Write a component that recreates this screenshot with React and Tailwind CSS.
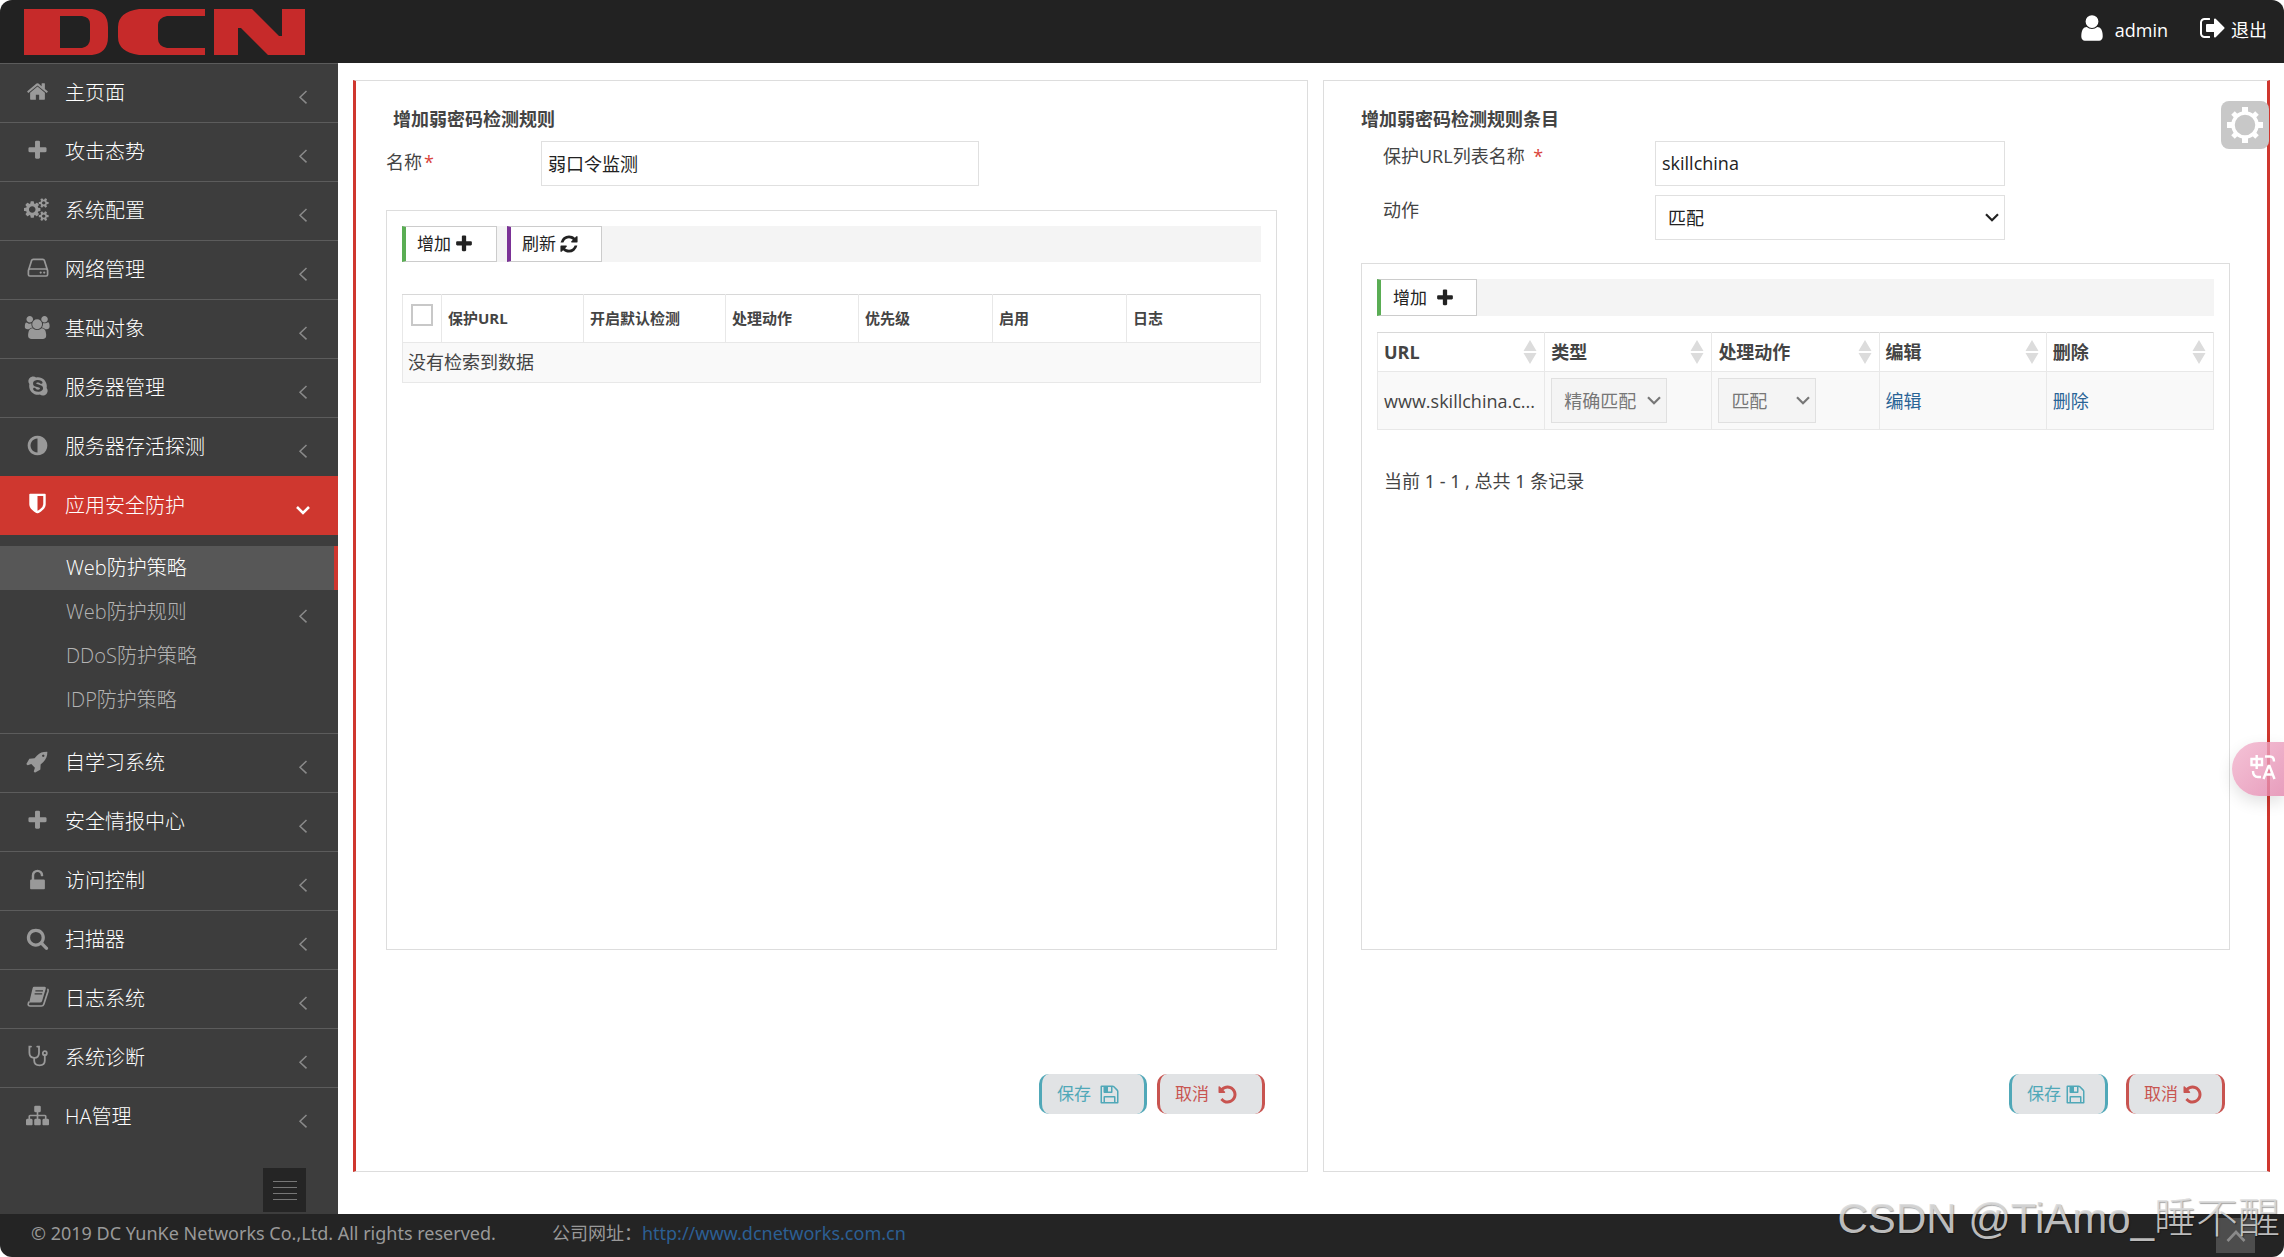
import { FaSkype } from 'react-icons/fa'

const ICONS = {
  home: 'M1472 992v480q0 26-19 45t-45 19h-384v-384h-256v384h-384q-26 0-45-19t-19-45v-480q0-1 .5-3t.5-3l575-474 575 474q1 2 1 6zm223-69l-62 74q-8 9-21 11h-3q-13 0-21-7l-692-577-692 577q-12 8-24 7-13-2-21-11l-62-74q-8-10-7-23.5t11-21.5l719-599q32-26 76-26t76 26l244 204v-195q0-14 9-23t23-9h192q14 0 23 9t9 23v408l219 182q10 8 11 21.5t-7 23.5z',
  plus: 'M1600 736v192q0 40-28 68t-68 28h-416v416q0 40-28 68t-68 28h-192q-40 0-68-28t-28-68v-416h-416q-40 0-68-28t-28-68v-192q0-40 28-68t68-28h416v-416q0-40 28-68t68-28h192q40 0 68 28t28 68v416h416q40 0 68 28t28 68z',
  cogs: 'M896 896q0-106-75-181t-181-75-181 75-75 181 75 181 181 75 181-75 75-181zm768 512q0-52-38-90t-90-38-90 38-38 90q0 53 37.5 90.5t90.5 37.5 90.5-37.5 37.5-90.5zm0-1024q0-52-38-90t-90-38-90 38-38 90q0 53 37.5 90.5t90.5 37.5 90.5-37.5 37.5-90.5zm-384 421v185q0 10-7 19.5t-16 10.5l-155 24q-11 35-32 76 34 48 90 115 7 11 7 20 0 12-7 19-23 30-82.5 89.5t-78.5 59.5q-11 0-21-7l-115-90q-37 19-77 31-11 108-23 155-7 24-30 24h-186q-11 0-20-7.5t-10-17.5l-23-153q-34-10-75-31l-118 89q-7 7-20 7-11 0-21-8-144-133-144-160 0-9 7-19 10-14 41-53t47-61q-23-44-35-82l-152-24q-10-1-17-9.5t-7-19.5v-185q0-10 7-19.5t16-10.5l155-24q11-35 32-76-34-48-90-115-7-11-7-20 0-12 7-20 22-30 82-89t79-59q11 0 21 7l115 90q34-18 77-32 11-108 23-154 7-24 30-24h186q11 0 20 7.5t10 17.5l23 153q34 10 75 31l118-89q8-7 20-7 11 0 21 8 144 133 144 160 0 8-7 19-12 16-42 54t-45 60q23 48 34 82l152 23q10 2 17 10.5t7 19.5zm640 533v140q0 16-149 31-12 27-30 52 51 113 51 138 0 4-4 7-122 71-124 71-8 0-46-47t-52-68q-20 2-30 2t-30-2q-14 21-52 68t-46 47q-2 0-124-71-4-3-4-7 0-25 51-138-18-25-30-52-149-15-149-31v-140q0-16 149-31 13-29 30-52-51-113-51-138 0-4 4-7 4-2 35-20t59-34 30-16q8 0 46 46.5t52 67.5q20-2 30-2t30 2q51-71 92-112l6-2q4 0 124 70 4 3 4 7 0 25-51 138 17 23 30 52 149 15 149 31zm0-1024v140q0 16-149 31-12 27-30 52 51 113 51 138 0 4-4 7-122 71-124 71-8 0-46-47t-52-68q-20 2-30 2t-30-2q-14 21-52 68t-46 47q-2 0-124-71-4-3-4-7 0-25 51-138-18-25-30-52-149-15-149-31v-140q0-16 149-31 13-29 30-52-51-113-51-138 0-4 4-7 4-2 35-20t59-34 30-16q8 0 46 46.5t52 67.5q20-2 30-2t30 2q51-71 92-112l6-2q4 0 124 70 4 3 4 7 0 25-51 138 17 23 30 52 149 15 149 31z',
  users: 'M657 896q-162 5-265 128h-134q-82 0-138-40.5t-56-118.5q0-353 124-353 6 0 43.5 21t97.5 42.5 119 21.5q67 0 133-23-5 37-5 66 0 159 93 290zm1071 637q0 120-73 189.5t-194 69.5h-874q-121 0-194-69.5t-73-189.5q0-53 3.5-103.5t14-109 26.5-108.5 43-97.5 62-81 85.5-53.5 111.5-20q10 0 43 21.5t73 48 107 48 135 21.5 135-21.5 107-48 73-48 43-21.5q61 0 111.5 20t85.5 53.5 62 81 43 97.5 26.5 108.5 14 109 3.5 103.5zm-1024-1277q0 106-75 181t-181 75-181-75-75-181 75-181 181-75 181 75 75 181zm704 384q0 159-112.5 271.5t-271.5 112.5-271.5-112.5-112.5-271.5 112.5-271.5 271.5-112.5 271.5 112.5 112.5 271.5zm576 225q0 78-56 118.5t-138 40.5h-134q-103-123-265-128 93-131 93-290 0-29-5-66 66 23 133 23 59 0 119-21.5t97.5-42.5 43.5-21q124 0 124 353zm-128-609q0 106-75 181t-181 75-181-75-75-181 75-181 181-75 181 75 75 181z',
  adjust: 'M896 1440v-1088q-148 0-273 73t-198 198-73 273 73 273 198 198 273 73zm768-544q0 209-103 385.5t-279.5 279.5-385.5 103-385.5-103-279.5-279.5-103-385.5 103-385.5 279.5-279.5 385.5-103 385.5 103 279.5 279.5 103 385.5z',
  shield: 'M1344 960v-640h-448v1137q119-63 213-137 235-184 235-360zm192-768v768q0 86-33.5 170.5t-83 150-118 127.5-126.5 103-121 77.5-89.5 49.5-42.5 20q-12 6-26 6t-26-6q-16-7-42.5-20t-89.5-49.5-121-77.5-126.5-103-118-127.5-83-150-33.5-170.5v-768q0-26 19-45t45-19h1152q26 0 45 19t19 45z',
  rocket: 'M1440 448q0-40-28-68t-68-28-68 28-28 68 28 68 68 28 68-28 28-68zm224-288q0 249-75.5 430.5t-253.5 360.5q-81 80-195 176l-20 379q-2 16-16 26l-384 224q-7 4-16 4-12 0-23-9l-64-64q-13-14-8-32l85-276-281-281-276 85q-3 1-9 1-14 0-23-9l-64-64q-17-19-5-39l224-384q10-14 26-16l379-20q96-114 176-195 188-187 358-258t431-71q14 0 24 9.5t10 22.5z',
  unlock: 'M1376 896q40 0 68 28t28 68v576q0 40-28 68t-68 28h-960q-40 0-68-28t-28-68v-576q0-40 28-68t68-28h32v-320q0-185 131.5-316.5t316.5-131.5 316.5 131.5 131.5 316.5q0 26-19 45t-45 19h-64q-26 0-45-19t-19-45q0-106-75-181t-181-75-181 75-75 181v320h736z',
  search: 'M1216 832q0-185-131.5-316.5t-316.5-131.5-316.5 131.5-131.5 316.5 131.5 316.5 316.5 131.5 316.5-131.5 131.5-316.5zm512 832q0 52-38 90t-90 38q-54 0-90-38l-343-342q-179 124-399 124-143 0-273.5-55.5t-225-150-150-225-55.5-273.5 55.5-273.5 150-225 225-150 273.5-55.5 273.5 55.5 225 150 150 225 55.5 273.5q0 220-124 399l343 343q37 37 37 90z',
  sitemap: 'M1792 1248v320q0 40-28 68t-68 28h-320q-40 0-68-28t-28-68v-320q0-40 28-68t68-28h96v-192h-512v192h96q40 0 68 28t28 68v320q0 40-28 68t-68 28h-320q-40 0-68-28t-28-68v-320q0-40 28-68t68-28h96v-192h-512v192h96q40 0 68 28t28 68v320q0 40-28 68t-68 28h-320q-40 0-68-28t-28-68v-320q0-40 28-68t68-28h96v-192q0-52 38-90t90-38h512v-192h-96q-40 0-68-28t-28-68v-320q0-40 28-68t68-28h320q40 0 68 28t28 68v320q0 40-28 68t-68 28h-96v192h512q52 0 90 38t38 90v192h96q40 0 68 28t28 68z',
  refresh: 'M1639 1056q0 5-1 7-64 268-268 434.5t-478 166.5q-146 0-282.5-55t-243.5-157l-129 129q-19 19-45 19t-45-19-19-45v-448q0-26 19-45t45-19h448q26 0 45 19t19 45-19 45l-137 137q71 66 161 102t187 36q134 0 250-65t186-179q11-17 53-117 8-23 30-23h192q13 0 22.5 9.5t9.5 22.5zm25-800v448q0 26-19 45t-45 19h-448q-26 0-45-19t-19-45 19-45l138-138q-148-137-349-137-134 0-250 65t-186 179q-11 17-53 117-8 23-30 23h-199q-13 0-22.5-9.5t-9.5-22.5v-7q65-268 270-434.5t480-166.5q146 0 284 55.5t245 156.5l130-129q19-19 45-19t45 19 19 45z',
  undo: 'M1664 896q0 156-61 298t-164 245-245 164-298 61q-172 0-327-72.5t-264-204.5q-7-10-6.5-22.5t8.5-20.5l137-138q10-9 25-9 16 2 23 12 73 95 179 147t225 52q104 0 198.5-40.5t163.5-109.5 109.5-163.5 40.5-198.5-40.5-198.5-109.5-163.5-163.5-109.5-198.5-40.5q-98 0-188 35.5t-160 101.5l137 138q31 30 14 69-17 40-59 40h-448q-26 0-45-19t-19-45v-448q0-42 40-59 39-17 69 14l130 129q107-101 244.5-156.5t284.5-55.5q156 0 298 61t245 164 164 245 61 298z',
  save: 'M512 1536h768v-384h-768v384zm896 0h128v-896q0-14-10-38.5t-20-34.5l-281-281q-10-10-34-20t-39-10v416q0 40-28 68t-68 28h-576q-40 0-68-28t-28-68v-416h-128v1280h128v-416q0-40 28-68t68-28h832q40 0 68 28t28 68v416zm-384-928v-320q0-13-9.5-22.5t-22.5-9.5h-192q-13 0-22.5 9.5t-9.5 22.5v320q0 13 9.5 22.5t22.5 9.5h192q13 0 22.5-9.5t9.5-22.5zm640 32v928q0 40-28 68t-68 28h-1344q-40 0-68-28t-28-68v-1344q0-40 28-68t68-28h928q40 0 88 20t76 48l280 280q28 28 48 76t20 88z',
  user: 'M1536 1399q0 109-62.5 187t-150.5 78h-854q-88 0-150.5-78t-62.5-187q0-85 8.5-160.5t31.5-152 58.5-131 94-89 134.5-34.5q131 128 313 128t313-128q76 0 134.5 34.5t94 89 58.5 131 31.5 152 8.5 160.5zm-256-887q0 159-112.5 271.5t-271.5 112.5-271.5-112.5-112.5-271.5 112.5-271.5 271.5-112.5 271.5 112.5 112.5 271.5z',
  signOut: 'M704 1440q0 4 1 20t.5 26.5-3 23.5-10 19.5-20.5 6.5h-320q-119 0-203.5-84.5t-84.5-203.5v-704q0-119 84.5-203.5t203.5-84.5h320q13 0 22.5 9.5t9.5 22.5q0 4 1 20t.5 26.5-3 23.5-10 19.5-20.5 6.5h-320q-66 0-113 47t-47 113v704q0 66 47 113t113 47h312l11.5 1 11.5 3 8 5.5 7 9 2 13.5zm928-544q0 26-19 45l-544 544q-19 19-45 19t-45-19-19-45v-288h-448q-26 0-45-19t-19-45v-384q0-26 19-45t45-19h448v-288q0-26 19-45t45-19 45 19l544 544q19 19 19 45z',
}

const WIDE = ['cogs', 'users']

function Icon({ name, className }) {
  return (
    <svg viewBox={WIDE.includes(name) ? '0 0 2048 1792' : '0 0 1792 1792'} className={className} fill="currentColor" aria-hidden="true">
      <path d={ICONS[name]} />
    </svg>
  )
}

function HddIcon() {
  return (
    <svg viewBox="0 0 24 24" className="h-6 w-6" fill="none" stroke="currentColor" strokeWidth="1.7" aria-hidden="true">
      <path d="M2.6 14 5.6 4.6Q6 3.4 7.2 3.4h9.6q1.2 0 1.6 1.2L21.4 14" />
      <rect x="2.4" y="13" width="19.2" height="7" rx="1.4" />
      <circle cx="14.7" cy="16.6" r="1.1" fill="currentColor" stroke="none" />
      <circle cx="18.2" cy="16.6" r="1.1" fill="currentColor" stroke="none" />
    </svg>
  )
}

function BookIcon() {
  return (
    <svg viewBox="0 0 24 24" className="h-6 w-6" fill="none" stroke="currentColor" aria-hidden="true">
      <path d="M8 1.8h10.6q1.7 0 1.2 1.7l-3.7 12.4q-.5 1.7-2.2 1.7H3.2L6.6 3.2Q7 1.8 8 1.8z" fill="currentColor" stroke="none" />
      <path d="M3 16.6Q.9 21 4 21h11.4q1.8 0 2.4-1.8L22 6.2q.4-1.6-.6-2.2" strokeWidth="1.7" />
      <path d="M9.4 5.8h7.6M8.6 8.8h7.6" stroke="#3d3d3d" strokeWidth="1.2" />
    </svg>
  )
}

function StethoscopeIcon() {
  return (
    <svg viewBox="0 0 24 24" className="h-6 w-6" fill="none" stroke="currentColor" strokeWidth="1.8" strokeLinecap="round" aria-hidden="true">
      <path d="M5 2.6H3.4v6.2q0 5 4.8 5t4.8-5V2.6h-1.8" />
      <path d="M8.2 14v2.6q0 4.8 5.3 4.8t5.3-4.8v-5.4" />
      <circle cx="18.8" cy="9.2" r="2" />
    </svg>
  )
}

function Chevron({ open }) {
  return open ? (
    <svg viewBox="0 0 16 16" className="mt-2 h-4 w-4" fill="none" stroke="currentColor" strokeWidth="2.6" aria-hidden="true">
      <path d="M2 5 8 11 14 5" />
    </svg>
  ) : (
    <svg viewBox="0 0 16 16" className="mt-2 h-4 w-4 text-[#8a8a8a]" fill="none" stroke="currentColor" strokeWidth="1.5" aria-hidden="true">
      <path d="M11.5 2 5 8.2 11.5 14.4" />
    </svg>
  )
}

const MENU = [
  { label: '主页面', icon: <Icon name="home" className="h-[23px]" /> },
  { label: '攻击态势', icon: <Icon name="plus" className="h-[23px]" /> },
  { label: '系统配置', icon: <Icon name="cogs" className="h-[23px]" /> },
  { label: '网络管理', icon: <HddIcon /> },
  { label: '基础对象', icon: <Icon name="users" className="h-[23px]" /> },
  { label: '服务器管理', icon: <FaSkype className="h-[22px] w-[22px]" /> },
  { label: '服务器存活探测', icon: <Icon name="adjust" className="h-[23px]" /> },
  {
    label: '应用安全防护',
    icon: <Icon name="shield" className="h-[23px]" />,
    children: [
      { label: 'Web防护策略', active: true },
      { label: 'Web防护规则', more: true },
      { label: 'DDoS防护策略' },
      { label: 'IDP防护策略' },
    ],
  },
  { label: '自学习系统', icon: <Icon name="rocket" className="h-[23px]" /> },
  { label: '安全情报中心', icon: <Icon name="plus" className="h-[23px]" /> },
  { label: '访问控制', icon: <Icon name="unlock" className="h-[23px]" /> },
  { label: '扫描器', icon: <Icon name="search" className="h-[23px]" /> },
  { label: '日志系统', icon: <BookIcon /> },
  { label: '系统诊断', icon: <StethoscopeIcon /> },
  { label: 'HA管理', icon: <Icon name="sitemap" className="h-[23px]" /> },
]

function Logo() {
  return (
    <svg viewBox="0 0 282 46" className="ml-6 h-[46px] w-[282px]" fill="#c62a2a" role="img" aria-label="DCN">
      <path fillRule="evenodd" d="M0 0h68q16 2 16 18v10q0 16-16 18H0zM36 7v32h22q8-2 8-9V15q0-7-8-8z" />
      <path d="M181 0v7h-38q-9 2-9 9v14q0 7 9 9h38v7h-66q-21-3-21-18V18q0-15 21-18z" />
      <path d="M190 0h38l27 27h3V0h23v46h-37l-27-27h-3v27h-24z" />
    </svg>
  )
}

function TopBar() {
  return (
    <header className="flex h-[63px] items-center justify-between bg-[#222] pr-[17px] text-lg text-white">
      <a href="#home"><Logo /></a>
      <nav className="flex items-center gap-[31px] pb-1">
        <a href="#profile" className="flex items-center gap-2">
          <Icon name="user" className="mb-1 h-[30px]" />
          admin
        </a>
        <a href="#logout" className="flex items-center gap-1">
          <Icon name="signOut" className="mb-1 h-7" />
          退出
        </a>
      </nav>
    </header>
  )
}

function Sidebar() {
  return (
    <aside className="flex w-[338px] shrink-0 flex-col bg-[#3d3d3d] text-xl font-light text-white">
      <ul>
        {MENU.map((item) => (
          <li key={item.label}>
            <a
              href="#menu"
              className={
                item.children
                  ? 'flex h-[59px] items-center bg-[#cf372f] pr-[27px] pl-6'
                  : 'flex h-[59px] items-center border-t border-[#5c5c5c] pr-[27px] pl-6'
              }
            >
              <span className={item.children ? 'mb-1 flex w-[27px] justify-center' : 'mb-1 flex w-[27px] justify-center text-[#999]'}>
                {item.icon}
              </span>
              <span className="ml-3.5 flex-1">{item.label}</span>
              <Chevron open={!!item.children} />
            </a>
            {item.children && (
              <ul className="py-[11px]">
                {item.children.map((sub) => (
                  <li key={sub.label}>
                    <a
                      href="#submenu"
                      className={
                        sub.active
                          ? 'flex h-11 items-center border-r-4 border-[#cf372f] bg-[#575757] pr-[23px] pl-[66px]'
                          : 'flex h-11 items-center pr-[27px] pl-[66px] text-[#b4b4b4]'
                      }
                    >
                      <span className="flex-1">{sub.label}</span>
                      {sub.more && <Chevron />}
                    </a>
                  </li>
                ))}
              </ul>
            )}
          </li>
        ))}
      </ul>
      <button aria-label="收起菜单" className="mt-auto mr-8 mb-0.5 flex h-11 w-[43px] flex-col items-center justify-center gap-[5px] self-end bg-[#252525]">
        <span className="h-px w-6 bg-[#777]" />
        <span className="h-px w-6 bg-[#777]" />
        <span className="h-px w-6 bg-[#777]" />
        <span className="h-px w-6 bg-[#777]" />
      </button>
    </aside>
  )
}

function SortIcon() {
  return (
    <svg viewBox="0 0 14 24" className="h-6 w-3.5" fill="#dcdcdc" aria-hidden="true">
      <path d="M7 0 13.5 11H.5zM7 24 13.5 13H.5z" />
    </svg>
  )
}

// Native select with the browser arrow swapped for our own
function Select({ className, children, ...props }) {
  return (
    <div className={`relative h-[45px] ${className}`}>
      <select {...props} className="h-full w-full appearance-none border border-[#e0e0e0] bg-inherit px-3">
        {children}
      </select>
      <svg viewBox="0 0 14 9" className="pointer-events-none absolute top-[18px] right-1.5 h-[9px] w-3.5" fill="none" stroke="currentColor" strokeWidth="2.2" aria-hidden="true">
        <path d="M1 1.2 7 7.2 13 1.2" />
      </svg>
    </div>
  )
}

function FormButtons({ className, spacing }) {
  return (
    <div className={className}>
      <button className={`flex h-10 items-center rounded-[10px] border-x-3 border-[#50a8b8] bg-[#e1e3e5] pl-[15px] text-[17px] text-[#50a8b8] ${spacing}`}>
        保存 <Icon name="save" className="h-[21px]" />
      </button>
      <button className={`flex h-10 items-center rounded-[10px] border-x-3 border-[#c85450] bg-[#e1e3e5] pl-[15px] text-[17px] text-[#c85450] ${spacing}`}>
        取消 <Icon name="undo" className="h-[21px]" />
      </button>
    </div>
  )
}

const RULE_COLUMNS = ['保护URL', '开启默认检测', '处理动作', '优先级', '启用', '日志']
const ENTRY_COLUMNS = ['URL', '类型', '处理动作', '编辑', '删除']

function RulePanel() {
  return (
    <section className="flex flex-col border border-l-3 border-[#ddd] border-l-[#cf372f] px-[30px] pt-6 pb-[57px]">
      <h2 className="pl-[7px] text-lg leading-7 font-bold">增加弱密码检测规则</h2>
      <div className="mt-2 flex items-center">
        <label htmlFor="ruleName" className="w-[155px] pb-1">
          名称<span className="ml-0.5 text-[#d9433b]">*</span>
        </label>
        <input id="ruleName" defaultValue="弱口令监测" className="h-[45px] w-[438px] border border-[#e0e0e0] px-1.5 pb-0.5 text-[#222]" />
      </div>

      <div className="mt-6 min-h-[740px] border border-[#ddd] p-[15px]">
        <div className="flex h-9 gap-2.5 bg-[#f4f4f4] text-[17px] text-[#222]">
          <button className="flex w-[95px] items-center gap-[3px] border border-l-4 border-[#ccc] border-l-[#5aad54] bg-white pl-[11px]">
            增加 <Icon name="plus" className="h-5" />
          </button>
          <button className="flex w-[95px] items-center gap-[3px] border border-l-4 border-[#ccc] border-l-[#7b3296] bg-white pl-[11px]">
            刷新 <Icon name="refresh" className="h-5" />
          </button>
        </div>

        <table className="mt-8 w-full table-fixed border-collapse border border-[#e8e8e8] border-t-[#d8d8d8] text-left">
          <colgroup>
            <col className="w-[39px]" />
            <col className="w-[142px]" />
            <col className="w-[142px]" />
            <col className="w-[133px]" />
            <col className="w-[134px]" />
            <col className="w-[134px]" />
            <col className="w-[134px]" />
          </colgroup>
          <thead>
            <tr className="h-12">
              <th className="border-r border-[#e8e8e8]">
                <input type="checkbox" aria-label="全选" className="mx-auto mb-2 block h-[22px] w-[22px] appearance-none border-2 border-[#c8c8c8] bg-white" />
              </th>
              {RULE_COLUMNS.map((name) => (
                <th key={name} className="border-r border-[#e8e8e8] px-1.5 pb-0.5 text-[15px] font-bold">{name}</th>
              ))}
            </tr>
          </thead>
          <tbody>
            <tr className="h-10 border-t border-[#e8e8e8] bg-[#f9f9f9]">
              <td colSpan={7} className="px-[5px] pb-0.5">没有检索到数据</td>
            </tr>
          </tbody>
        </table>
      </div>

      <FormButtons className="mt-[124px] mr-3 flex justify-end gap-2.5" spacing="gap-2 pr-6" />
    </section>
  )
}

function EntryPanel() {
  return (
    <section className="flex flex-col border border-r-3 border-[#ddd] border-r-[#cf372f] px-[37px] pt-6 pb-[57px]">
      <h2 className="text-lg leading-7 font-bold">增加弱密码检测规则条目</h2>
      <div className="mt-2 flex items-start pl-[22px]">
        <label htmlFor="listName" className="w-[272px] pt-px">
          保护URL列表名称 <span className="ml-1 text-[#d9433b]">*</span>
        </label>
        <input id="listName" defaultValue="skillchina" className="h-[45px] w-[350px] border border-[#e0e0e0] px-1.5 pb-0.5 text-[#222]" />
      </div>
      <div className="mt-[9px] flex items-start pl-[22px]">
        <label htmlFor="action" className="w-[272px] pt-px">动作</label>
        <Select id="action" className="w-[350px] bg-white text-[#222]">
          <option>匹配</option>
        </Select>
      </div>

      <div className="mt-[23px] flex-1 border border-[#ddd] p-[15px]">
        <div className="flex h-[37px] bg-[#f4f4f4] text-[17px] text-[#222]">
          <button className="flex w-[100px] items-center gap-2 border border-l-4 border-[#ccc] border-l-[#5aad54] bg-white pl-3">
            增加 <Icon name="plus" className="h-5" />
          </button>
        </div>

        <table className="mt-4 w-full table-fixed border-collapse border border-[#e8e8e8] border-t-[#d8d8d8] text-left">
          <thead>
            <tr className="h-[39px]">
              {ENTRY_COLUMNS.map((name) => (
                <th key={name} className="border-r border-[#e8e8e8] pr-[7px] pl-1.5 font-bold">
                  <div className="flex items-center justify-between">
                    {name}
                    <SortIcon />
                  </div>
                </th>
              ))}
            </tr>
          </thead>
          <tbody>
            <tr className="h-[58px] border-t border-[#e8e8e8] bg-[#f9f9f9]">
              <td className="border-r border-[#e8e8e8] pl-1.5 whitespace-nowrap">www.skillchina.c...</td>
              <td className="border-r border-[#e8e8e8] px-1.5">
                <Select disabled aria-label="类型" className="w-[116px] bg-[#f4f4f4] text-[#777]">
                  <option>精确匹配</option>
                </Select>
              </td>
              <td className="border-r border-[#e8e8e8] px-1.5">
                <Select disabled aria-label="处理动作" className="w-[98px] bg-[#f4f4f4] text-[#777]">
                  <option>匹配</option>
                </Select>
              </td>
              <td className="border-r border-[#e8e8e8] px-1.5">
                <a href="#edit" className="text-[#2a6496]">编辑</a>
              </td>
              <td className="px-1.5">
                <a href="#delete" className="text-[#2a6496]">删除</a>
              </td>
            </tr>
          </tbody>
        </table>
        <p className="mt-[37px] pl-[7px] font-['Noto_Sans','Noto_Sans_CJK_SC',sans-serif]">当前 1 - 1 , 总共 1 条记录</p>
      </div>

      <FormButtons className="mt-[124px] mr-[5px] flex justify-end gap-[18px]" spacing="gap-1 pr-[19px]" />
    </section>
  )
}

// Floating controls that sit above the page
function Floating() {
  return (
    <>
      <button aria-label="设置" className="absolute top-[101px] right-[15px] flex h-12 w-12 items-center justify-center rounded-lg bg-[#c8c8c8]">
        <svg viewBox="0 0 36 36" className="h-9 w-9" fill="none" stroke="#fff" aria-hidden="true">
          <circle cx="18" cy="18" r="12" strokeWidth="3.5" />
          <path d="M18 0v6M18 30v6M0 18h6M30 18h6" strokeWidth="6" />
          <path d="m6 6 4 4M30 6l-4 4M6 30l4-4M30 30l-4-4" strokeWidth="5" />
        </svg>
      </button>
      <button aria-label="翻译" className="absolute top-[742px] right-0 flex h-[54px] w-[52px] items-center justify-center rounded-l-full bg-linear-to-br from-[#f2b4cd]/80 to-[#e185ac]/80 pl-2.5 shadow-[0_6px_16px_rgba(0,0,0,0.12)]">
        <svg viewBox="0 0 26 26" className="mb-1 h-[26px] w-[26px]" fill="none" stroke="#fff" strokeWidth="2.4" aria-hidden="true">
          <path d="M1.5 5h10.5v6H1.5zM6.7 1v14" />
          <path d="M15 2.5h5q4 0 4 5M3 17q0 6 5 6h3" />
          <path d="m13.5 25 5-13h1l5 13M15 20.5h8" />
        </svg>
      </button>
      <button aria-label="返回顶部" className="absolute right-[29px] bottom-1 flex h-[35px] w-[39px] items-center justify-center bg-[#4d4d4d] text-[#8a8a8a]">
        <svg viewBox="0 0 20 12" className="h-3 w-5" fill="none" stroke="currentColor" strokeWidth="2.6" aria-hidden="true">
          <path d="M1.5 11 10 2l8.5 9" />
        </svg>
      </button>
      <div className="pointer-events-none absolute right-1 bottom-2.5 font-['Liberation_Sans','Noto_Sans_CJK_SC',sans-serif] text-[42px] leading-[56px] font-light text-[#dadada]/85 [text-shadow:1px_1px_1px_rgba(0,0,0,0.35)]">
        CSDN @TiAmo_睡不醒
      </div>
    </>
  )
}

export default function App() {
  return (
    <div className="relative flex min-h-screen flex-col overflow-hidden rounded-xl bg-white font-['Open_Sans','Noto_Sans_CJK_SC',sans-serif] text-lg leading-7 text-[#444]">
      <TopBar />
      <div className="flex flex-1">
        <Sidebar />
        <main className="grid flex-1 grid-cols-[954fr_948fr] gap-[15px] pt-[17px] pr-3.5 pb-[42px] pl-[15px]">
          <RulePanel />
          <EntryPanel />
        </main>
      </div>
      <footer className="flex h-[43px] items-center gap-14 bg-[#242424] pb-1.5 pl-[31px] font-['Noto_Sans','Noto_Sans_CJK_SC',sans-serif] text-[#999]">
        <span>© 2019 DC YunKe Networks Co.,Ltd. All rights reserved.</span>
        <span>
          公司网址：<a href="#site" className="text-[#2c5f93]">http://www.dcnetworks.com.cn</a>
        </span>
      </footer>
      <Floating />
    </div>
  )
}
